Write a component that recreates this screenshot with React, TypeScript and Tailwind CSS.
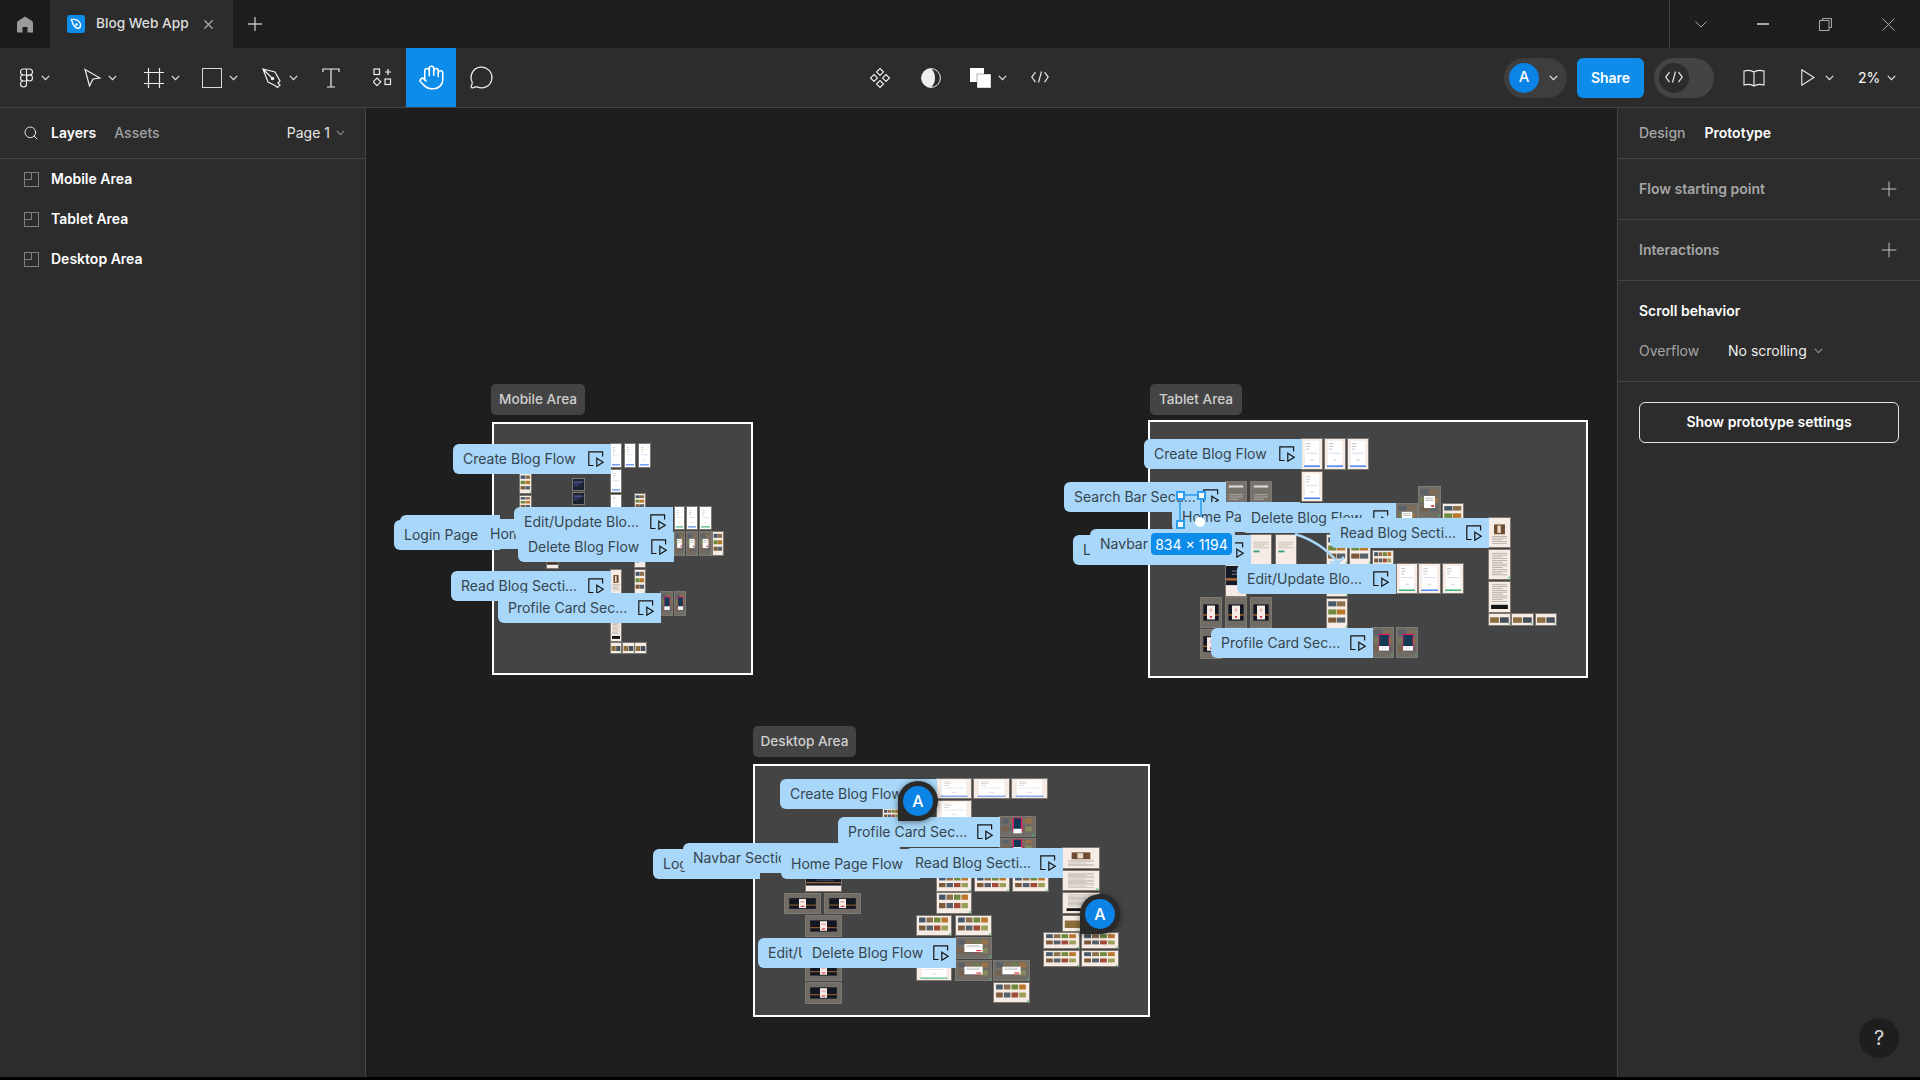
import React from "react";
import { Hand, MessageCircle, Plus, Search, X } from "lucide-react";

const OX = 366;
const OY = 108;

function Chev({ className = "", color = "#e6e6e6" }: { className?: string; color?: string }) {
  return (
    <svg width="9" height="6" viewBox="0 0 9 6" className={className} fill="none">
      <path d="M0.8 0.8 L4.5 4.6 L8.2 0.8" stroke={color} strokeWidth="1.2" />
    </svg>
  );
}

function FlowIcon() {
  return (
    <svg width="16" height="16" viewBox="0 0 16 16" fill="none" className="shrink-0">
      <path d="M5.5 14.5 H0.8 V0.8 H14.6 V5.5" stroke="#151515" strokeWidth="1.2" />
      <path d="M8.8 7.2 L15.2 11.2 L8.8 15.2 Z" stroke="#151515" strokeWidth="1.2" />
    </svg>
  );
}

type R = [number, number, number, number];

function PhotoGrid({ w, h, dim }: { w: number; h: number; dim?: boolean }) {
  const wide = w > h * 1.2;
  const cols = wide ? 4 : 2;
  const rows = wide ? 2 : 3;
  const colors = ["#46586a", "#8b6f4e", "#6f8a3e", "#b9772e", "#7c5a3a", "#55606a", "#a04a3a", "#9aa05a"];
  const cells = [];
  for (let r = 0; r < rows; r++) {
    for (let c = 0; c < cols; c++) {
      const cw = 88 / cols;
      const ch = 84 / rows;
      cells.push(
        <rect
          key={r + "-" + c}
          x={6 + c * cw}
          y={8 + r * ch}
          width={cw - 3}
          height={ch * 0.62}
          fill={colors[(r * cols + c) % colors.length]}
          opacity={dim ? 0.55 : 1}
        />
      );
    }
  }
  return <>{cells}</>;
}

function Lines({ x, y, w, n, gap, color = "#a8a29c" }: { x: number; y: number; w: number; n: number; gap: number; color?: string }) {
  const out = [];
  for (let i = 0; i < n; i++) {
    out.push(<rect key={i} x={x} y={y + i * gap} width={i % 3 === 2 ? w * 0.7 : w} height={gap * 0.4} fill={color} />);
  }
  return <>{out}</>;
}

function Thumb({ r, kind, white }: { r: R; kind: string; white?: boolean }) {
  const w = r[2] - r[0];
  const h = r[3] - r[1];
  const wide = w > h;
  const cream = "#f6ece5";
  let art: React.ReactNode = null;
  if (kind === "form" || kind === "formg") {
    const bar = kind === "form" ? "#4a80ee" : "#35ad6b";
    art = (
      <>
        <rect width="100" height="100" fill={white ? "#ffffff" : cream} />
        <rect x="14" y="6" width="72" height="88" fill="#ffffff" />
        <Lines x={20} y={14} w={22} n={3} gap={9} color="#c9c9c9" />
        <rect x="20" y="46" width="60" height="2.5" fill={kind === "form" ? "#c5d3f0" : "#cfcfcf"} />
        <rect x="42" y="68" width="16" height="4" fill="#d4d4d4" />
        <rect x="10" y="88" width="80" height="5" fill={bar} />
      </>
    );
  } else if (kind === "photo") {
    art = (
      <>
        <rect width="100" height="100" fill={cream} />
        <PhotoGrid w={w} h={h} />
        <rect x="94" y="92" width="5" height="6" fill="#2ecc71" />
      </>
    );
  } else if (kind === "modal") {
    art = (
      <>
        <rect width="100" height="100" fill="#716c66" />
        <PhotoGrid w={w} h={h} dim />
        <rect x="24" y="30" width="52" height="40" fill="#ffffff" />
        <Lines x={30} y={36} w={38} n={2} gap={7} color="#aaa" />
        <rect x="58" y="60" width="14" height="6" fill="#d9303f" />
        <rect x="94" y="92" width="5" height="6" fill="#2ecc71" />
      </>
    );
  } else if (kind === "auth") {
    art = (
      <>
        <rect width="100" height="100" fill="#716c66" />
        <rect x="12" y="22" width="76" height="56" fill="#111621" />
        <rect x="12" y="56" width="76" height="5" fill="#a8662f" />
        <rect x={wide ? 40 : 30} y="26" width={wide ? 20 : 40} height="48" fill="#f7ebe6" />
        <rect x="44" y="36" width="12" height="10" fill="#e8b4b4" />
        <rect x="45" y="62" width="10" height="6" fill="#d9303f" />
      </>
    );
  } else if (kind === "search") {
    art = (
      <>
        <rect width="100" height="100" fill="#77726c" />
        <rect x="14" y="12" width="72" height="8" fill="#d8d6d4" />
        <Lines x={16} y={44} w={68} n={3} gap={8} color="#b5b2ae" />
        <rect x="30" y="76" width="40" height="8" fill="#3e8f80" />
      </>
    );
  } else if (kind === "home") {
    art = (
      <>
        <rect width="100" height="100" fill={cream} />
        <Lines x={12} y={22} w={76} n={4} gap={6} color="#bdb7b0" />
        <rect x="12" y="50" width="30" height="6" fill="#3e9f90" />
      </>
    );
  } else if (kind === "hero") {
    art = (
      <>
        <rect width="100" height="100" fill={cream} />
        <rect y="6" width="100" height="60" fill="#141a28" />
        <rect y="44" width="100" height="8" fill="#a8662f" />
        <Lines x={30} y={20} w={50} n={2} gap={10} color="#60647a" />
      </>
    );
  } else if (kind === "navy") {
    art = (
      <>
        <rect width="100" height="100" fill="#1d2230" />
        <rect x="8" y="24" width="80" height="8" fill="#7a73d6" />
        <rect x="8" y="42" width="55" height="8" fill="#4b47a8" />
        <rect x="8" y="60" width="35" height="6" fill="#55607a" />
      </>
    );
  } else if (kind === "profile") {
    const px = wide ? 38 : 30;
    const pw = wide ? 24 : 50;
    art = (
      <>
        <rect width="100" height="100" fill="#716c66" />
        <PhotoGrid w={w} h={h} dim />
        <rect x={px} y={wide ? 5 : 22} width={pw} height={wide ? 70 : 50} fill="#123a52" stroke="#e01d6c" strokeWidth="4" />
        <rect x={px} y={wide ? 62 : 62} width={pw} height={wide ? 24 : 16} fill="#f5f5f5" />
        <rect x="92" y="92" width="6" height="6" fill="#2ecc71" />
      </>
    );
  } else if (kind === "article") {
    art = (
      <>
        <rect width="100" height="100" fill={cream} />
        <rect x="24" y="22" width="52" height="34" fill="#6e4d30" />
        <rect x="40" y="26" width="16" height="26" fill="#e8d9c8" />
        <Lines x={14} y={62} w={72} n={5} gap={6} color="#a8a29c" />
      </>
    );
  } else if (kind === "text") {
    art = (
      <>
        <rect width="100" height="100" fill={cream} />
        <Lines x={14} y={10} w={72} n={13} gap={6.2} color="#a8a29c" />
        <rect x="92" y="92" width="6" height="6" fill="#2ecc71" />
      </>
    );
  } else if (kind === "textdark") {
    art = (
      <>
        <rect width="100" height="100" fill={cream} />
        <Lines x={14} y={8} w={72} n={10} gap={6.2} color="#a8a29c" />
        <rect x="10" y="76" width="80" height="14" fill="#151515" />
      </>
    );
  } else if (kind === "strip") {
    art = (
      <>
        <rect width="100" height="100" fill={cream} />
        <rect x="5" y="30" width="42" height="50" fill="#8b6f3e" />
        <rect x="52" y="30" width="42" height="50" fill="#46505a" />
        <rect x="92" y="84" width="6" height="10" fill="#2ecc71" />
      </>
    );
  }
  return (
    <svg
      className="absolute blur-[0.4px]"
      style={{ left: r[0] - OX, top: r[1] - OY, width: w, height: h, outline: "1px solid #7d7872" }}
      viewBox="0 0 100 100"
      preserveAspectRatio="none"
    >
      {art}
    </svg>
  );
}

function Frame({ r, name, labelX, labelW, labelY }: { r: R; name: string; labelX: number; labelW: number; labelY: number }) {
  return (
    <>
      <div
        className="absolute flex h-[31px] items-center justify-center rounded-[5px] bg-[#444444] text-[13.6px] font-medium text-[#cfcfcf]"
        style={{ left: labelX - OX, top: labelY - OY, width: labelW }}
      >
        {name}
      </div>
      <div
        className="absolute border-2 border-white bg-[#444444]"
        style={{ left: r[0] - OX, top: r[1] - OY, width: r[2] - r[0], height: r[3] - r[1] }}
      />
    </>
  );
}

function Flow({ x, y, x2, text, icon = true }: { x: number; y: number; x2: number; text: string; icon?: boolean }) {
  return (
    <div
      className="absolute flex h-[30px] items-center justify-between overflow-hidden rounded-l-[6px] bg-[#a8d7f9] pl-[10px] pr-[7px] text-[14px] whitespace-nowrap text-[#36454f]"
      style={{ left: x - OX, top: y - OY, width: x2 - x }}
    >
      <span className="mb-[2px]">{text}</span>
      {icon && <FlowIcon />}
    </div>
  );
}

function Pin({ cx, cy }: { cx: number; cy: number }) {
  return (
    <div
      className="absolute flex h-[40px] w-[40px] items-center justify-center rounded-full rounded-bl-none bg-[#2a2a2a] shadow-[0_1px_6px_rgba(0,0,0,0.5)]"
      style={{ left: cx - 20 - OX, top: cy - 20 - OY }}
    >
      <div className="flex h-[30px] w-[30px] items-center justify-center rounded-full bg-[#0b84e6] text-[16px] font-medium text-white">A</div>
    </div>
  );
}

function Handle({ x, y }: { x: number; y: number }) {
  return <div className="absolute h-[9px] w-[9px] border-2 border-[#2d9df0] bg-white" style={{ left: x - 4 - OX, top: y - 4 - OY }} />;
}

const thumbs: [R, string, boolean?][] = [
  // mobile
  [[611, 444, 621, 467], "form", true],
  [[625, 444, 635, 467], "form", true],
  [[639, 444, 650, 467], "form", true],
  [[611, 470, 621, 492], "form", true],
  [[611, 495, 621, 510], "form", true],
  [[520, 474, 531, 493], "photo"],
  [[520, 496, 531, 510], "photo"],
  [[573, 479, 584, 490], "navy"],
  [[573, 493, 584, 504], "navy"],
  [[635, 494, 645, 510], "photo"],
  [[675, 507, 684, 529], "formg", true],
  [[687, 507, 697, 529], "form", true],
  [[700, 507, 711, 529], "formg", true],
  [[675, 532, 684, 555], "modal"],
  [[687, 532, 697, 555], "modal"],
  [[700, 532, 711, 555], "modal"],
  [[713, 532, 723, 555], "photo"],
  [[547, 558, 558, 568], "hero"],
  [[635, 558, 645, 567], "home"],
  [[611, 570, 621, 593], "article"],
  [[635, 570, 645, 593], "photo"],
  [[661, 592, 672, 615], "profile"],
  [[675, 592, 685, 615], "profile"],
  [[611, 620, 621, 641], "textdark"],
  [[611, 643, 621, 653], "strip"],
  [[623, 643, 634, 653], "strip"],
  [[635, 643, 646, 653], "strip"],
  // tablet
  [[1302, 439, 1322, 469], "form"],
  [[1325, 439, 1345, 469], "form"],
  [[1348, 439, 1368, 469], "form"],
  [[1302, 472, 1322, 501], "form"],
  [[1226, 482, 1246, 510], "search"],
  [[1251, 482, 1271, 510], "search"],
  [[1419, 487, 1440, 517], "modal"],
  [[1397, 504, 1417, 530], "modal"],
  [[1443, 504, 1463, 530], "photo"],
  [[1489, 518, 1510, 547], "article"],
  [[1489, 550, 1510, 579], "text"],
  [[1489, 582, 1510, 612], "textdark"],
  [[1489, 614, 1510, 625], "strip"],
  [[1512, 614, 1533, 625], "strip"],
  [[1536, 614, 1556, 625], "strip"],
  [[1251, 535, 1271, 566], "home"],
  [[1276, 535, 1296, 566], "home"],
  [[1327, 535, 1347, 564], "photo"],
  [[1350, 535, 1370, 564], "photo"],
  [[1373, 551, 1393, 566], "photo"],
  [[1397, 564, 1417, 593], "formg"],
  [[1419, 564, 1440, 593], "form"],
  [[1443, 564, 1463, 593], "formg"],
  [[1226, 564, 1246, 596], "hero"],
  [[1327, 580, 1347, 596], "photo"],
  [[1327, 599, 1347, 628], "photo"],
  [[1201, 598, 1221, 627], "auth"],
  [[1226, 598, 1246, 627], "auth"],
  [[1251, 598, 1271, 627], "auth"],
  [[1201, 630, 1221, 658], "auth"],
  [[1373, 628, 1393, 657], "profile"],
  [[1397, 628, 1417, 657], "profile"],
  // desktop
  [[937, 779, 971, 798], "form"],
  [[974, 779, 1009, 798], "form"],
  [[1012, 779, 1047, 798], "form"],
  [[937, 801, 971, 820], "form"],
  [[883, 809, 900, 820], "photo"],
  [[1000, 817, 1035, 836], "profile"],
  [[1000, 839, 1035, 852], "profile"],
  [[1063, 848, 1099, 868], "article"],
  [[1063, 871, 1099, 890], "text"],
  [[1063, 893, 1099, 913], "textdark"],
  [[1063, 916, 1099, 931], "strip"],
  [[937, 875, 971, 891], "photo"],
  [[975, 875, 1009, 891], "photo"],
  [[1013, 875, 1048, 891], "photo"],
  [[937, 893, 971, 913], "photo"],
  [[917, 916, 951, 935], "photo"],
  [[956, 916, 991, 935], "photo"],
  [[956, 938, 991, 958], "modal"],
  [[956, 961, 991, 980], "modal"],
  [[994, 961, 1029, 980], "modal"],
  [[994, 983, 1029, 1002], "photo"],
  [[917, 960, 951, 980], "formg"],
  [[1044, 933, 1079, 948], "photo"],
  [[1082, 933, 1118, 948], "photo"],
  [[1044, 951, 1079, 966], "photo"],
  [[1082, 951, 1118, 966], "photo"],
  [[806, 875, 841, 891], "hero"],
  [[785, 894, 820, 913], "auth"],
  [[825, 894, 860, 913], "auth"],
  [[806, 916, 841, 936], "auth"],
  [[806, 960, 841, 980], "auth"],
  [[806, 983, 841, 1003], "auth"],
];

const lower: [number, number, number, string, boolean?][] = [
  // mobile
  [453, 444, 611, "Create Blog Flow"],
  [400, 515, 500, "Navbar Section", false],
  [394, 520, 500, "Login Page", false],
  [480, 519, 640, "Home Page Flow", false],
  [514, 507, 673, "Edit/Update Blo..."],
  [518, 532, 674, "Delete Blog Flow"],
  [451, 571, 611, "Read Blog Secti..."],
  [498, 593, 661, "Profile Card Sec..."],
  // tablet
  [1144, 439, 1302, "Create Blog Flow"],
  [1064, 482, 1226, "Search Bar Secti..."],
  [1172, 502, 1300, "Home Page Flow", false],
  [1241, 503, 1396, "Delete Blog Flow"],
  [1073, 535, 1251, "Login Page"],
  [1090, 529, 1235, "Navbar Section", false],
  [1330, 518, 1489, "Read Blog Secti..."],
  [1237, 564, 1396, "Edit/Update Blo..."],
  [1211, 628, 1373, "Profile Card Sec..."],
  // desktop
  [780, 779, 937, "Create Blog Flow"],
  [838, 817, 1000, "Profile Card Sec..."],
  [653, 849, 760, "Login Page", false],
  [683, 843, 900, "Navbar Section", false],
  [781, 849, 920, "Home Page Flow", false],
  [905, 848, 1063, "Read Blog Secti..."],
  [758, 938, 900, "Edit/Update Blo...", false],
  [802, 938, 956, "Delete Blog Flow"],
];

function Canvas() {
  return (
    <div className="relative h-full flex-1 overflow-hidden bg-[#1e1e1e]">
      <Frame r={[492, 422, 753, 675]} name="Mobile Area" labelX={491} labelW={94} labelY={384} />
      <Frame r={[1148, 420, 1588, 678]} name="Tablet Area" labelX={1150} labelW={92} labelY={384} />
      <Frame r={[753, 764, 1150, 1017]} name="Desktop Area" labelX={753} labelW={103} labelY={726} />
      {thumbs.map((t, i) => (
        <Thumb key={i} r={t[0]} kind={t[1]} white={t[2]} />
      ))}
      {lower.map((l, i) => (
        <Flow key={i} x={l[0]} y={l[1]} x2={l[2]} text={l[3]} icon={l[4] !== false} />
      ))}
      {/* connector */}
      <svg className="absolute" style={{ left: 1290 - OX, top: 530 - OY, width: 60, height: 36 }} viewBox="0 0 60 36" fill="none">
        <path d="M5 4 C24 10 38 20 48 33" stroke="#a8d7f9" strokeWidth="2.5" />
        <path d="M40 32 L48 33 L54 27" stroke="#a8d7f9" strokeWidth="2.5" />
      </svg>
      {/* selection */}
      <svg className="absolute" style={{ left: 1176 - OX, top: 490 - OY, width: 30, height: 40 }} viewBox="0 0 30 40" fill="none">
        <path d="M4 34 V5 H25 V34" stroke="#2d9df0" strokeWidth="1.5" />
      </svg>
      <Handle x={1180} y={495} />
      <Handle x={1201} y={495} />
      <Handle x={1180} y={524} />
      <div className="absolute h-[10px] w-[10px] rounded-full bg-white" style={{ left: 1195 - OX, top: 517 - OY }} />
      <div
        className="absolute flex h-[22px] w-[81px] items-center justify-center rounded-[4px] bg-[#0d8ce9] text-[14px] text-white"
        style={{ left: 1151 - OX, top: 533 - OY }}
      >
        834 × 1194
      </div>
      <Pin cx={918} cy={801} />
      <Pin cx={1100} cy={914} />
    </div>
  );
}

function TabBar() {
  return (
    <div className="flex h-[48px] shrink-0 bg-[#1e1e1e]">
      <div className="flex w-[50px] items-center justify-center bg-[#1b1b1b]">
        <svg width="16" height="17" viewBox="0 0 16 17" fill="#9a9a9a">
          <path d="M8 0.5 L15 5 Q16 5.8 16 7 V16.5 H10.5 V11 H5.5 V16.5 H0 V7 Q0 5.8 1 5 Z" />
        </svg>
      </div>
      <div className="flex w-[183px] items-center bg-[#2c2c2c] pl-[17px]">
        <svg width="18" height="18" viewBox="0 0 18 18" fill="none">
          <rect width="18" height="18" rx="3" fill="#0d8ce9" />
          <path d="M4.5 4.5 Q11 3.5 13.5 9 Q14 12.5 11.5 13.5 Q6.5 13 4.5 4.5 Z" stroke="#fff" strokeWidth="1.3" />
          <circle cx="9.5" cy="9.5" r="1.3" fill="#fff" />
        </svg>
        <span className="ml-[11px] mb-[1px] text-[13.7px] font-medium whitespace-nowrap text-[#dedede]">Blog Web App</span>
        <X size={15} strokeWidth={2} className="ml-[12px] text-[#a8a8a8]" />
      </div>
      <div className="ml-[11px] flex items-center">
        <Plus size={22} strokeWidth={1.5} className="text-[#c0c0c0]" />
      </div>
      <div className="flex-1" />
      <div className="flex w-[251px] items-center border-l border-[#444444] text-[#a8a8a8]">
        <div className="flex w-[63px] justify-center">
          <svg width="12" height="7" viewBox="0 0 12 7" fill="none" stroke="currentColor">
            <path d="M0.5 0.5 L6 6 L11.5 0.5" />
          </svg>
        </div>
        <div className="flex w-[62px] justify-center">
          <div className="h-[1.5px] w-[12px] bg-[#a8a8a8]" />
        </div>
        <div className="flex w-[64px] justify-center">
          <svg width="13" height="13" viewBox="0 0 13 13" fill="none" stroke="currentColor">
            <path d="M3.5 2.5 V0.5 H12.5 V9.5 H10" />
            <rect x="0.5" y="2.5" width="9.5" height="10" />
          </svg>
        </div>
        <div className="flex w-[63px] justify-center">
          <svg width="13" height="13" viewBox="0 0 13 13" fill="none" stroke="currentColor">
            <path d="M0.5 0.5 L12.5 12.5 M12.5 0.5 L0.5 12.5" />
          </svg>
        </div>
      </div>
    </div>
  );
}

function CodeIcon({ size = 18 }: { size?: number }) {
  return (
    <svg width={size} height={size * 0.67} viewBox="0 0 18 12" fill="none" stroke="#e6e6e6" strokeWidth="1.2">
      <path d="M4.5 1 L0.8 6 L4.5 11 M13.5 1 L17.2 6 L13.5 11 M10.5 0.5 L7.5 11.5" />
    </svg>
  );
}

function Tool({ w, children, chev }: { w: number; children: React.ReactNode; chev?: boolean }) {
  return (
    <div className="flex items-center" style={{ width: w }}>
      {children}
      {chev && <Chev className="ml-[7px]" />}
    </div>
  );
}

function Toolbar() {
  return (
    <div className="flex h-[60px] shrink-0 items-center border-b border-[#444444] bg-[#2c2c2c]">
      <div className="flex items-center pl-[19px]">
        <Tool w={65} chev>
          <svg width="15" height="20" viewBox="0 0 14 20" fill="none" stroke="#eeeeee" strokeWidth="1.1">
            <path d="M7 1 H4 a3 3 0 0 0 0 6 H7 Z M7 1 H10 a3 3 0 0 1 0 6 H7 Z M7 7 H4 a3 3 0 0 0 0 6 H7 Z M7 13 H4 a3 3 0 1 0 3 3 Z" />
            <circle cx="10" cy="10" r="3" />
          </svg>
        </Tool>
        <Tool w={60} chev>
          <svg width="17" height="19" viewBox="0 0 17 19" fill="none" stroke="#eeeeee" strokeWidth="1.2">
            <path d="M1 1.5 L16 10 L9 11 L5.5 18 Z" />
          </svg>
        </Tool>
        <Tool w={58} chev>
          <svg width="20" height="20" viewBox="0 0 20 20" fill="none" stroke="#eeeeee" strokeWidth="1.2">
            <path d="M4.5 0 V20 M15.5 0 V20 M0 4.5 H20 M0 15.5 H20" />
          </svg>
        </Tool>
        <Tool w={60} chev>
          <div className="h-[20px] w-[20px] border-[1.5px] border-[#d8d8d8]" />
        </Tool>
        <Tool w={60} chev>
          <svg width="20" height="20" viewBox="0 0 20 20" fill="none" stroke="#eeeeee" strokeWidth="1.2">
            <path d="M1 1 L13 4 L18 13 L16 15 L18 17 L15.5 19.5 L13 17.5 L6 14 Z M1 1 L9.5 9.5" />
            <circle cx="10.5" cy="10.5" r="1.2" fill="#eeeeee" />
          </svg>
        </Tool>
        <Tool w={51}>
          <svg width="18" height="20" viewBox="0 0 18 20" fill="none" stroke="#eeeeee" strokeWidth="1.2">
            <path d="M1 4 V1 H17 V4 M9 1 V19 M5 19 H13" />
          </svg>
        </Tool>
        <Tool w={33}>
          <svg width="19" height="19" viewBox="0 0 19 19" fill="none" stroke="#eeeeee" strokeWidth="1.2">
            <rect x="1" y="1" width="5.5" height="5.5" />
            <path d="M15 1 V7 M12 4 H18" />
            <path d="M4 10 L7.8 13.8 L4 17.6 L0.2 13.8 Z" />
            <rect x="12" y="11" width="5.5" height="5.5" />
          </svg>
        </Tool>
        <div className="flex h-[59px] w-[50px] items-center justify-center bg-[#0d8ce9]">
          <Hand size={27} strokeWidth={1.4} className="text-white" />
        </div>
        <div className="flex w-[50px] justify-center">
          <MessageCircle size={25} strokeWidth={1.2} className="text-[#eeeeee]" />
        </div>
      </div>
      <div className="ml-[362px] flex items-center">
        <Tool w={53}>
          <svg width="24" height="24" viewBox="0 0 24 24" fill="none" stroke="#eeeeee" strokeWidth="1.1">
            <path d="M12 2.5 L15.5 6 L12 9.5 L8.5 6 Z M12 14.5 L15.5 18 L12 21.5 L8.5 18 Z M6 8.5 L9.5 12 L6 15.5 L2.5 12 Z M18 8.5 L21.5 12 L18 15.5 L14.5 12 Z" />
          </svg>
        </Tool>
        <Tool w={49}>
          <svg width="20" height="20" viewBox="0 0 20 20" fill="none">
            <circle cx="10" cy="10" r="9.4" stroke="#eeeeee" strokeWidth="1" />
            <path d="M10 0.6 A9.4 9.4 0 0 0 10 19.4 A13 13 0 0 0 10 0.6 Z" fill="#eeeeee" />
          </svg>
        </Tool>
        <Tool w={61} chev>
          <svg width="21" height="20" viewBox="0 0 21 20" fill="#ffffff">
            <rect x="0" y="0" width="14" height="14" />
            <rect x="7" y="6" width="14" height="14" stroke="#3a3a3a" strokeWidth="0.4" />
          </svg>
        </Tool>
        <CodeIcon />
      </div>
      <div className="ml-[455px] flex items-center">
        <div className="flex h-[40px] w-[63px] items-center rounded-full bg-[#3e3e3e] pl-[5px]">
          <div className="flex h-[30px] w-[30px] items-center justify-center rounded-full bg-[#0b84e6] text-[15px] font-medium text-white">A</div>
          <Chev className="ml-[10px]" />
        </div>
        <div className="ml-[10px] flex h-[40px] w-[67px] items-center justify-center rounded-[6px] bg-[#0d8ce9] text-[14px] font-semibold text-white">Share</div>
        <div className="ml-[10px] flex h-[40px] w-[60px] items-center rounded-full bg-[#444444] pl-[5px]">
          <div className="flex h-[30px] w-[30px] items-center justify-center rounded-full bg-[#2c2c2c]">
            <CodeIcon />
          </div>
        </div>
        <svg className="ml-[29px]" width="22" height="20" viewBox="0 0 22 20" fill="none" stroke="#eeeeee" strokeWidth="1.1">
          <path d="M11 4 C9 2.5 5 2 1 3 V17 C5 16 9 16.5 11 18 C13 16.5 17 16 21 17 V3 C17 2 13 2.5 11 4 Z M11 4 V18" />
        </svg>
        <svg className="ml-[36px]" width="14" height="17" viewBox="0 0 14 17" fill="none" stroke="#eeeeee" strokeWidth="1.1">
          <path d="M0.8 0.8 L13 8.5 L0.8 16.2 Z" />
        </svg>
        <Chev className="ml-[10px]" />
        <span className="ml-[24px] text-[14px] text-white">2%</span>
        <Chev className="ml-[7px]" />
      </div>
    </div>
  );
}

function LayerRow({ name }: { name: string }) {
  return (
    <div className="flex h-[40px] items-center pl-[24px]">
      <svg width="15" height="15" viewBox="0 0 15 15" fill="none" stroke="#7f7f7f">
        <rect x="0.5" y="0.5" width="14" height="14" />
        <path d="M0.5 7.5 H7.5 V0.5" />
      </svg>
      <span className="mb-[2px] ml-[12px] text-[14px] font-semibold text-white">{name}</span>
    </div>
  );
}

function LeftPanel() {
  return (
    <div className="h-full w-[366px] shrink-0 border-r border-[#444444] bg-[#2c2c2c]">
      <div className="flex h-[51px] items-center border-b border-[#444444] pl-[23px] pr-[20px]">
        <Search size={16} strokeWidth={1.5} className="text-[#e6e6e6]" />
        <span className="mb-[2px] ml-[12px] text-[14px] font-semibold text-white">Layers</span>
        <span className="mb-[2px] ml-[18px] text-[14px] font-medium text-[#a0a0a0]">Assets</span>
        <div className="ml-auto flex items-center">
          <span className="mb-[2px] text-[14px] text-[#e6e6e6]">Page 1</span>
          <Chev className="ml-[6px]" color="#8a8a8a" />
        </div>
      </div>
      <LayerRow name="Mobile Area" />
      <LayerRow name="Tablet Area" />
      <LayerRow name="Desktop Area" />
    </div>
  );
}

function RightRow({ name }: { name: string }) {
  return (
    <div className="flex h-[61px] items-center justify-between border-b border-[#444444] pl-[21px] pr-[19px]">
      <span className="mb-[2px] text-[14px] font-semibold text-[#a6a6a6]">{name}</span>
      <Plus size={24} strokeWidth={0.9} className="text-[#d0d0d0]" />
    </div>
  );
}

function RightPanel() {
  return (
    <div className="relative h-full w-[303px] shrink-0 border-l border-[#444444] bg-[#2c2c2c]">
      <div className="flex h-[51px] items-center border-b border-[#444444] pl-[21px]">
        <span className="mb-[2px] text-[14px] font-medium text-[#a6a6a6]">Design</span>
        <span className="mb-[2px] ml-[19px] text-[14px] font-semibold text-white">Prototype</span>
      </div>
      <RightRow name="Flow starting point" />
      <RightRow name="Interactions" />
      <div className="h-[101px] border-b border-[#444444] pl-[21px] pt-[20px]">
        <div className="text-[14px] leading-[20px] font-semibold text-white">Scroll behavior</div>
        <div className="mt-[20px] flex items-center text-[14px] leading-[20px]">
          <span className="w-[89px] text-[#a6a6a6]">Overflow</span>
          <span className="text-[#f0f0f0]">No scrolling</span>
          <Chev className="ml-[7px]" color="#8a8a8a" />
        </div>
      </div>
      <div className="px-[21px] pt-[20px]">
        <div className="flex h-[41px] w-[260px] items-center justify-center rounded-[6px] border border-[#e6e6e6] pb-[2px] text-[14px] font-semibold text-white">
          Show prototype settings
        </div>
      </div>
      <div className="absolute right-[21px] bottom-[19px] flex h-[40px] w-[40px] items-center justify-center rounded-full bg-[#1e1e1e] text-[20px] text-[#d8d8d8]">?</div>
    </div>
  );
}

export default function App() {
  return (
    <div className="flex h-[1080px] w-[1920px] flex-col overflow-hidden bg-black font-['Inter',sans-serif]">
      <TabBar />
      <Toolbar />
      <div className="flex h-[969px] shrink-0">
        <LeftPanel />
        <Canvas />
        <RightPanel />
      </div>
    </div>
  );
}
